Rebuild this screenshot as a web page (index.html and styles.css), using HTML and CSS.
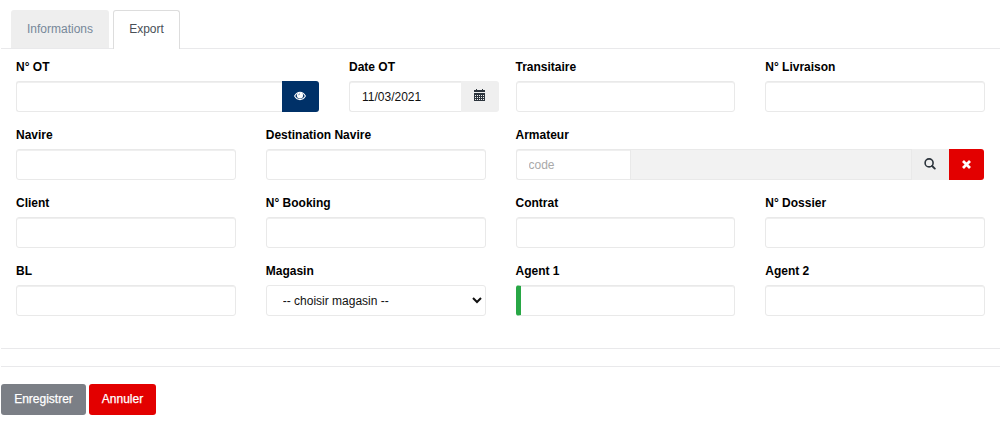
FILE: index.html
```html
<!DOCTYPE html>
<html lang="fr">
<head>
<meta charset="utf-8">
<title>Export</title>
<link rel="stylesheet" href="styles.css">
</head>
<body>
<main class="page">
  <nav class="tabs">
    <a class="tab">Informations</a>
    <a class="tab tab-active">Export</a>
  </nav>
  <form class="form">
    <div class="field span-4"><label>N° OT</label>
      <div class="group">
        <input class="control" type="text">
        <button class="addon addon-navy" type="button"><svg width="12" height="10" viewBox="0 0 12 10"><path fill="#003168" stroke="#fff" stroke-width="1.1" d="M.6 5Q2.8 1.3 6 1.3T11.4 5Q9.2 8.6 6 8.6T.6 5Z"/><circle cx="6" cy="4.4" r="3.1" fill="#fff"/><path fill="none" stroke="#003168" stroke-width=".5" d="M4.5 4.2Q4.7 2.9 6 2.8"/></svg></button>
      </div>
    </div>
    <div class="field span-2"><label>Date OT</label>
      <div class="group group-date">
        <input class="control" type="text" value="11/03/2021">
        <span class="addon addon-date"><svg width="11" height="12" viewBox="0 0 11 12" shape-rendering="crispEdges"><path fill="#2c343c" d="M2 0h1v1H2zM8 0h1v1H8zM0 1h11v2H0zM0 4h11v8H0z"/><path fill="#efefef" d="M1 6h1v1H1zM3 6h1v1H3zM5 6h1v1H5zM7 6h1v1H7zM9 6h1v1H9zM1 8h1v1H1zM3 8h1v1H3zM5 8h1v1H5zM7 8h1v1H7zM9 8h1v1H9zM1 10h1v1H1zM3 10h1v1H3zM5 10h1v1H5zM7 10h1v1H7zM9 10h1v1H9z"/></svg></span>
      </div>
    </div>
    <div class="field span-3"><label>Transitaire</label><input class="control" type="text"></div>
    <div class="field span-3"><label>N° Livraison</label><input class="control" type="text"></div>

    <div class="field span-3"><label>Navire</label><input class="control" type="text"></div>
    <div class="field span-3"><label>Destination Navire</label><input class="control" type="text"></div>
    <div class="field span-6"><label>Armateur</label>
      <div class="group group-lookup">
        <input class="control code" type="text" placeholder="code">
        <input class="control readonly" type="text" readonly>
        <button class="addon addon-search" type="button"><svg width="12" height="12" viewBox="0 0 12 12"><circle cx="5.1" cy="4.9" r="4" fill="none" stroke="#2c343c" stroke-width="1.6"/><path stroke="#2c343c" stroke-width="1.9" stroke-linecap="round" d="M8.2 8L10.8 10.6"/></svg></button>
        <button class="addon addon-red" type="button"><svg width="9" height="9" viewBox="0 0 9 9"><path stroke="#fff" stroke-width="2.8" d="M1 1L8 8M8 1L1 8"/></svg></button>
      </div>
    </div>

    <div class="field span-3"><label>Client</label><input class="control" type="text"></div>
    <div class="field span-3"><label>N° Booking</label><input class="control" type="text"></div>
    <div class="field span-3"><label>Contrat</label><input class="control" type="text"></div>
    <div class="field span-3"><label>N° Dossier</label><input class="control" type="text"></div>

    <div class="field span-3"><label>BL</label><input class="control" type="text"></div>
    <div class="field span-3"><label>Magasin</label>
      <select class="control select"><option>-- choisir magasin --</option></select>
    </div>
    <div class="field span-3"><label>Agent 1</label><input class="control required" type="text"></div>
    <div class="field span-3"><label>Agent 2</label><input class="control" type="text"></div>
  </form>
  <hr class="rule">
  <hr class="rule">
  <div class="actions">
    <button class="btn btn-grey" type="button">Enregistrer</button>
    <button class="btn btn-red" type="button">Annuler</button>
  </div>
</main>
</body>
</html>
```

FILE: styles.css
```css
* { box-sizing: border-box; }
body {
  margin: 0;
  background: #fff;
  color: #000;
  font: 12px/18px "Liberation Sans", Arial, sans-serif;
}
.page { width: 999px; margin-left: 1px; padding-top: 10px; }
.tabs {
  display: flex;
  gap: 4px;
  height: 39px;
  padding-left: 10px;
  border-bottom: 1px solid #e9e9eb;
}
.tab {
  height: 38px;
  width: 98px;
  padding-top: 10px;
  text-align: center;
  border-radius: 3px 3px 0 0;
  background: #eee;
  color: #778899;
}
.tab-active {
  width: 67px;
  height: 39px;
  padding-top: 9px;
  border: 1px solid #ddd;
  border-bottom: 0;
  background: #fff;
  color: #495057;
}
.form {
  display: grid;
  grid-template-columns: repeat(12, minmax(0, 1fr));
  row-gap: 14px;
  padding-top: 9px;
}
.field { padding: 0 15px; min-width: 0; }
.field label { display: block; height: 18px; margin-bottom: 5px; font-weight: 700; }
.span-2 { grid-column: span 2; }
.span-3 { grid-column: span 3; }
.span-4 { grid-column: span 4; }
.span-6 { grid-column: span 6; }
.control {
  display: block;
  width: 100%;
  min-width: 0;
  height: 31px;
  padding: 0 12px;
  border: 1px solid #e9e9e9;
  border-radius: 3px;
  background: #fff;
  box-shadow: inset 0 1px 0 #efefef;
  color: #111;
  font: inherit;
}
.control::placeholder { color: #a9a9a9; opacity: 1; }
.select { padding: 0 1px 0 12px; box-shadow: none; }
.required { border-left: 5px solid #28a745; }
.group { display: flex; }
.group .control { flex: 1; border-radius: 3px 0 0 3px; border-right-width: 0; }
.group-date { width: 150px; }
.group-lookup { margin-right: 1px; }
.group .code { flex: 0 0 114px; }
.group .readonly { border-radius: 0; background: #f2f2f2; border-right-width: 1px; box-shadow: none; }
.addon {
  display: flex;
  flex: none;
  align-items: center;
  justify-content: center;
  width: 37px;
  height: 31px;
  padding: 0;
  border: 0;
  border-radius: 0 3px 3px 0;
  background: #efefef;
}
.addon-navy { background: #003168; padding: 0 1px 1px 0; }
.addon-date { width: 38px; padding: 0 1px 3px 0; }
.addon-search { border-radius: 0; padding: 0 1px 1px 0; }
.addon-red { width: 35px; padding: 0 1px 1px 0; background: #e30000; }
.rule { height: 1px; margin: 0 0 17px; border: 0; background: #e9e9eb; }
.form + .rule { margin-top: 32px; }
.actions { display: flex; gap: 3px; }
.btn {
  width: 85px;
  height: 31px;
  padding: 0 0 1px;
  border: 0;
  border-radius: 3px;
  background: #7b7f86;
  color: #fff;
  font: inherit;
  -webkit-text-stroke: .25px #fff;
}
.btn-red { width: 67px; background: #e30000; }
```
